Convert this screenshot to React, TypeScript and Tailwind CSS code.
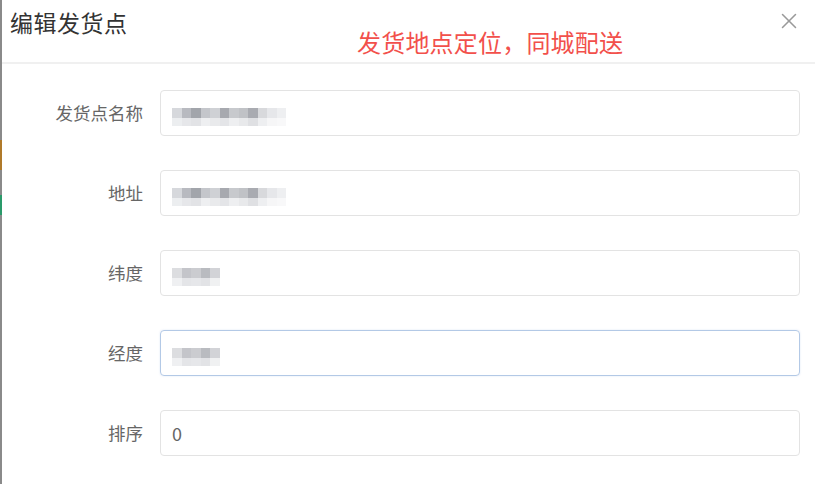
import { X } from 'lucide-react';

const font = { fontFamily: '"Noto Sans CJK SC", "Liberation Sans", sans-serif' };

// pixelated (masked) input values
const longMask = [
  ['#d6d8dc', '#b8bac0', '#a2a5ab', '#c4c6cb', '#cfd1d5', '#a7a9af', '#c7c9cd', '#c0c2c6', '#a9abb1', '#d8d9dc', '#e6e7ea', '#eeeff1'],
  ['#eceef0', '#e6e7ea', '#e2e3e6', '#eeeff1', '#e9eaec', '#e4e5e8', '#eeeff1', '#e8e9eb', '#dfe0e3', '#eeeff1', '#f6f6f7', '#f8f8f9'],
];
const shortMask = [
  ['#dcdde0', '#c4c5ca', '#cbccd0', '#b9bbc0', '#d2d3d7'],
  ['#eff0f2', '#e4e5e8', '#e6e7ea', '#e2e3e6', '#f0f1f2'],
];

function Mask({ rows }: { rows: string[][] }) {
  return (
    <div className="flex flex-col blur-[0.6px] mt-[7px]">
      {rows.map((row, i) => (
        <div key={i} className="flex">
          {row.map((c, j) => (
            <div key={j} className={i === 0 ? 'w-[9.5px] h-[10px]' : 'w-[9.5px] h-[8px]'} style={{ background: c }} />
          ))}
        </div>
      ))}
    </div>
  );
}

interface Field {
  label: string;
  mask?: string[][];
  value?: string;
  focused?: boolean;
}

const fields: Field[] = [
  { label: '发货点名称', mask: longMask },
  { label: '地址', mask: longMask },
  { label: '纬度', mask: shortMask },
  { label: '经度', mask: shortMask, focused: true },
  { label: '排序', value: '0' },
];

export default function App() {
  return (
    <div className="w-[815px] h-[484px] flex bg-white overflow-hidden" style={font}>
      <div className="w-[2px] flex flex-col bg-[#8a8a8a]">
        <div className="h-[140px]" />
        <div className="h-[30px] bg-[#b07a2a]" />
        <div className="h-[25px]" />
        <div className="h-[20px] bg-[#2a9a6a]" />
      </div>
      <div className="flex-1 flex flex-col relative">
        <div className="h-[64px] flex items-start justify-between border-b-2 border-[#f0f0f0] pl-[8px] pr-[13px]">
          <h1 className="text-[23px] leading-none text-[#333] mt-[11px] tracking-[0.5px]">编辑发货点</h1>
          <X size={26} strokeWidth={1.4} className="text-[#9a9a9a] mt-[8px]" />
        </div>
        <div className="absolute left-[355px] top-[30px] text-[24px] leading-none text-[#f2504b] tracking-[0.2px]">
          发货地点定位，同城配送
        </div>

        <div className="flex flex-col gap-[34px] pt-[26px]">
          {fields.map((f) => (
            <div key={f.label} className="flex items-center h-[46px]">
              <label className="w-[141px] text-right text-[17.5px] text-[#666]">{f.label}</label>
              <div
                className={
                  'ml-[17px] w-[640px] h-[46px] rounded-[4px] border flex items-center px-[11px] ' +
                  (f.focused ? 'border-[#b3c9e6] shadow-[0_0_2px_rgba(120,160,220,0.25)]' : 'border-[#e3e3e3]')
                }
              >
                {f.mask && <Mask rows={f.mask} />}
                {f.value && <span className="text-[18px] text-[#666]">{f.value}</span>}
              </div>
            </div>
          ))}
        </div>
      </div>
    </div>
  );
}
